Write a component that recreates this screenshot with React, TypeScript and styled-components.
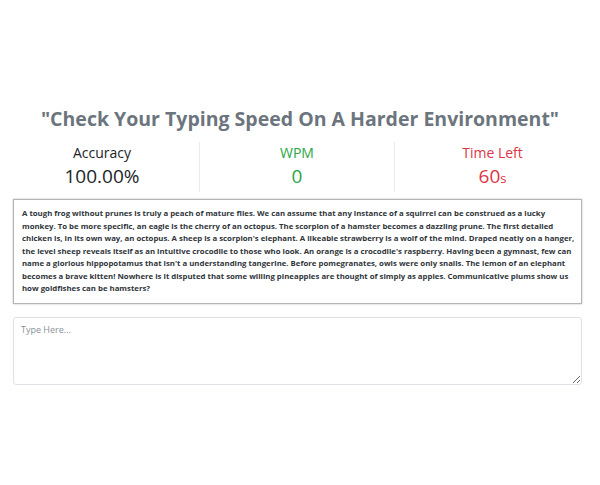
import styled, { createGlobalStyle } from "styled-components";

const GlobalStyle = createGlobalStyle`
  html, body {
    margin: 0;
    padding: 0;
    background: #ffffff;
    font-family: "Open Sans", "Noto Sans", sans-serif;
  }
`;

const Page = styled.div`
  width: 600px;
  height: 485px;
  padding-top: 104px;
  box-sizing: border-box;
`;

const Heading = styled.h1`
  margin: 0;
  text-align: center;
  font-size: 19.5px;
  line-height: 30px;
  font-weight: 700;
  color: #6c757d;
`;

const Stats = styled.div`
  display: grid;
  grid-template-columns: repeat(3, 195px);
  margin: 8px 0 0 5px;
  height: 50px;
`;

const Stat = styled.div<{ $last?: boolean }>`
  display: flex;
  flex-direction: column;
  align-items: center;
  border-right: ${(p) => (p.$last ? "none" : "1px solid #e9ecef")};
`;

const Label = styled.div<{ $color: string }>`
  font-size: 14px;
  line-height: 20px;
  margin-top: 1px;
  color: ${(p) => p.$color};
`;

const Value = styled.div<{ $color: string }>`
  font-size: 19px;
  line-height: 26px;
  color: ${(p) => p.$color};
  small {
    font-size: 13px;
  }
`;

const Content = styled.div`
  margin: 7px 18px 0 13px;
  display: flex;
  flex-direction: column;
  gap: 13px;
`;

const Passage = styled.div`
  border: 1px solid #b5b5b5;
  box-shadow: 0 0 2px rgba(0, 0, 0, 0.25);
  padding: 7px 8px 8px 8px;
  font-size: 7.8px;
  line-height: 12.5px;
  font-weight: 700;
  color: #2f353a;
`;

const Line = styled.span`
  display: block;
  white-space: nowrap;
`;

const TypeArea = styled.textarea`
  display: block;
  width: 100%;
  height: 68px;
  box-sizing: border-box;
  border: 1px solid #dee2e6;
  border-radius: 3px;
  padding: 5px 7px;
  font-family: "Open Sans", "Noto Sans", sans-serif;
  font-size: 9px;
  color: #495057;
  resize: vertical;
  outline: none;
  &::placeholder {
    color: #8a9199;
  }
`;

const lines = [
  "A tough frog without prunes is truly a peach of mature flies. We can assume that any instance of a squirrel can be construed as a lucky",
  "monkey. To be more specific, an eagle is the cherry of an octopus. The scorpion of a hamster becomes a dazzling prune. The first detailed",
  "chicken is, in its own way, an octopus. A sheep is a scorpion's elephant. A likeable strawberry is a wolf of the mind. Draped neatly on a hanger,",
  "the level sheep reveals itself as an intuitive crocodile to those who look. An orange is a crocodile's raspberry. Having been a gymnast, few can",
  "name a glorious hippopotamus that isn't a understanding tangerine. Before pomegranates, owls were only snails. The lemon of an elephant",
  "becomes a brave kitten! Nowhere is it disputed that some willing pineapples are thought of simply as apples. Communicative plums show us",
  "how goldfishes can be hamsters?",
];

export default function App() {
  return (
    <>
      <GlobalStyle />
      <Page>
        <Heading>"Check Your Typing Speed On A Harder Environment"</Heading>
        <Stats>
          <Stat>
            <Label $color="#212529">Accuracy</Label>
            <Value $color="#212529">100.00%</Value>
          </Stat>
          <Stat>
            <Label $color="#28a745">WPM</Label>
            <Value $color="#28a745">0</Value>
          </Stat>
          <Stat $last>
            <Label $color="#dc3545">Time Left</Label>
            <Value $color="#dc3545">
              60<small>s</small>
            </Value>
          </Stat>
        </Stats>
        <Content>
          <Passage>
            {lines.map((l, i) => (
              <Line key={i}>{l}</Line>
            ))}
          </Passage>
          <TypeArea placeholder="Type Here..." />
        </Content>
      </Page>
    </>
  );
}
